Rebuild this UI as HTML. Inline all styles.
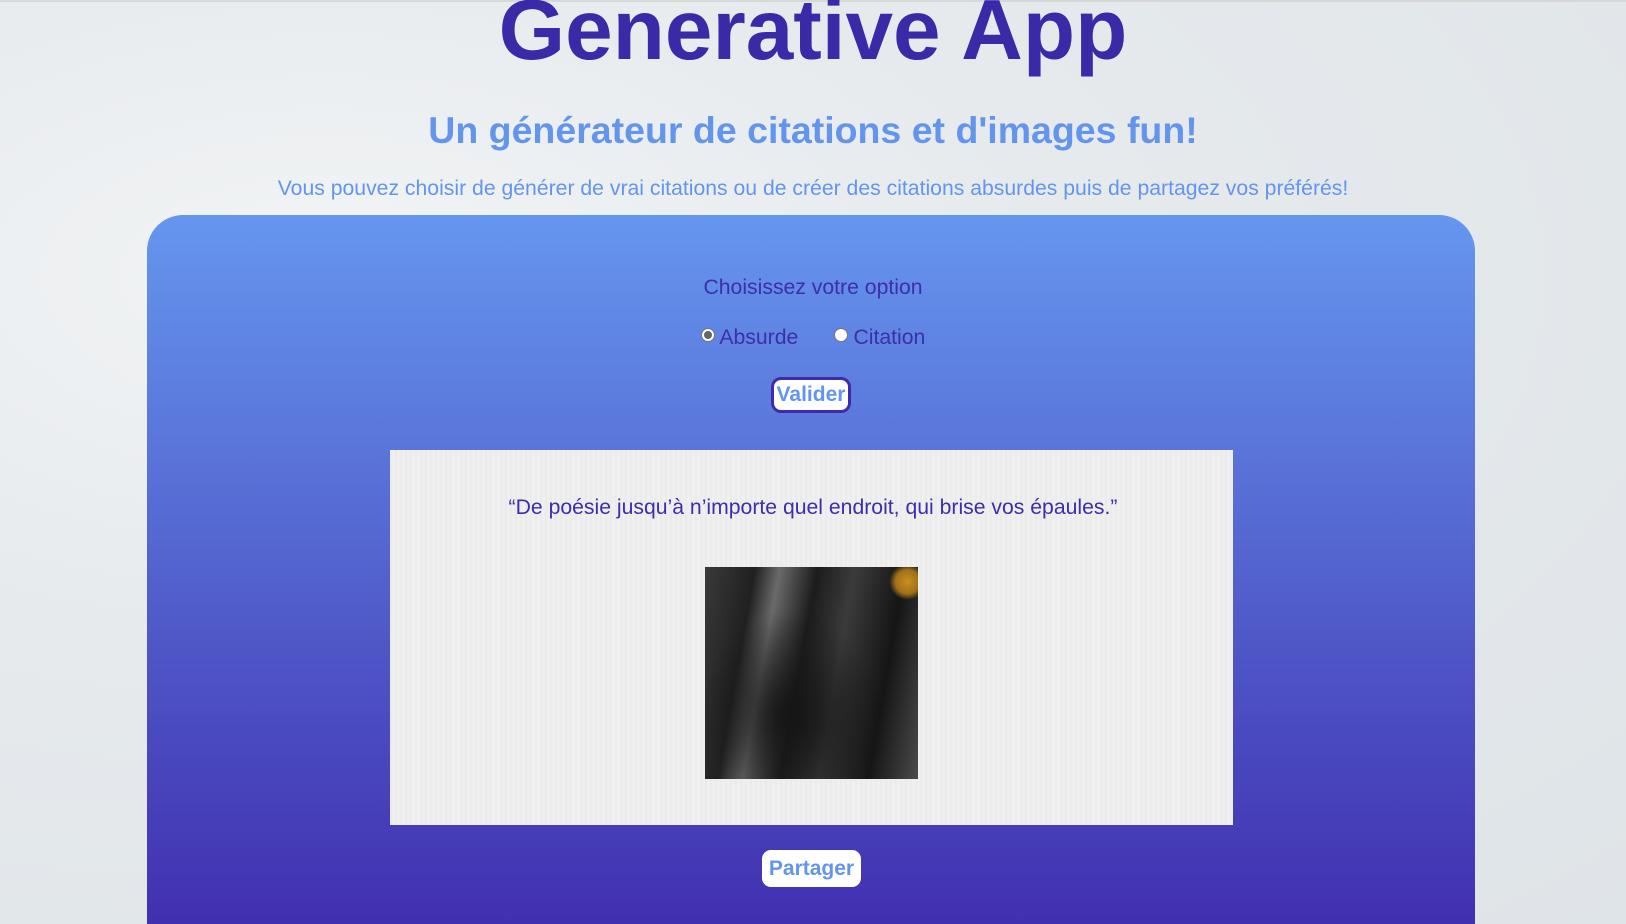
<!DOCTYPE html>
<html><head><meta charset="utf-8"><style>
html,body{margin:0;padding:0;width:1626px;height:924px;overflow:hidden;}
body{position:relative;font-family:"Liberation Sans",Arial,sans-serif;
background:radial-gradient(ellipse at 20% 30%,#f2f4f5 0,#e6eaed 40%,#dfe4e8 100%);}
.abs{position:absolute;left:0;width:1626px;text-align:center;white-space:nowrap;}
h1{margin:0;font-size:85.5px;font-weight:bold;color:#3a2aa8;top:-19px;line-height:100px;}
h2{margin:0;font-size:37.5px;font-weight:bold;color:#6495ed;top:108px;line-height:44px;}
.p{font-size:21.2px;color:#6495ed;top:177px;line-height:24px;}
.box{position:absolute;left:147px;top:215px;width:1328px;height:709px;border-radius:36px 36px 0 0;
background:linear-gradient(#6596ee 0%,#5b78dc 30%,#4d52c4 65%,#4130b0 100%);}
.lbl{font-size:21.2px;color:#3d2eaa;line-height:24px;}
.radio{display:inline-block;width:12px;height:12px;border-radius:50%;border:1.5px solid #777;background:#fff;vertical-align:middle;position:relative;top:-3px;}
.radio.on::after{content:"";position:absolute;left:2px;top:2px;width:8px;height:8px;border-radius:50%;background:#666;}
.btn{position:absolute;background:#fff;font-weight:bold;color:#6495ed;font-size:21px;text-align:center;}
.card{position:absolute;left:390px;top:450px;width:843px;height:375px;background:#efefef;
background-image:repeating-linear-gradient(90deg,rgba(0,0,0,.015) 0 2px,rgba(255,255,255,.02) 2px 5px);}
.img{position:absolute;left:705px;top:567px;width:213px;height:212px;
background:radial-gradient(circle at 95% 7%,#c89020 0,#a07018 12px,transparent 18px),
radial-gradient(ellipse at 40% 70%,#151515 0,transparent 50%),
linear-gradient(100deg,#3a3a3a 0%,#202020 20%,#6a6a6a 30%,#1c1c1c 45%,#3b3b3b 60%,#151515 80%,#4a4a4a 100%);}
</style></head><body>
<div class="abs" style="top:0;height:2px;background:#d8d8d8"></div>
<h1 class="abs">Generative App</h1>
<h2 class="abs">Un générateur de citations et d'images fun!</h2>
<div class="abs p">Vous pouvez choisir de générer de vrai citations ou de créer des citations absurdes puis de partagez vos préférés!</div>
<div class="box"></div>
<div class="abs lbl" style="top:276px">Choisissez votre option</div>
<div class="abs lbl" style="top:326px"><span class="radio on"></span> Absurde &nbsp;&nbsp;&nbsp;&nbsp; <span class="radio"></span> Citation</div>
<div class="btn" style="left:771px;top:377px;width:74px;height:30px;border:3px solid #3c2bab;border-radius:10px;line-height:30px;">Valider</div>
<div class="card"></div>
<div class="abs lbl" style="top:496px;color:#3d2eaa">“De poésie jusqu’à n’importe quel endroit, qui brise vos épaules.”</div>
<div class="img"></div>
<div class="btn" style="left:762px;top:850px;width:99px;height:37px;border-radius:9px;line-height:37px;">Partager</div>
</body></html>
